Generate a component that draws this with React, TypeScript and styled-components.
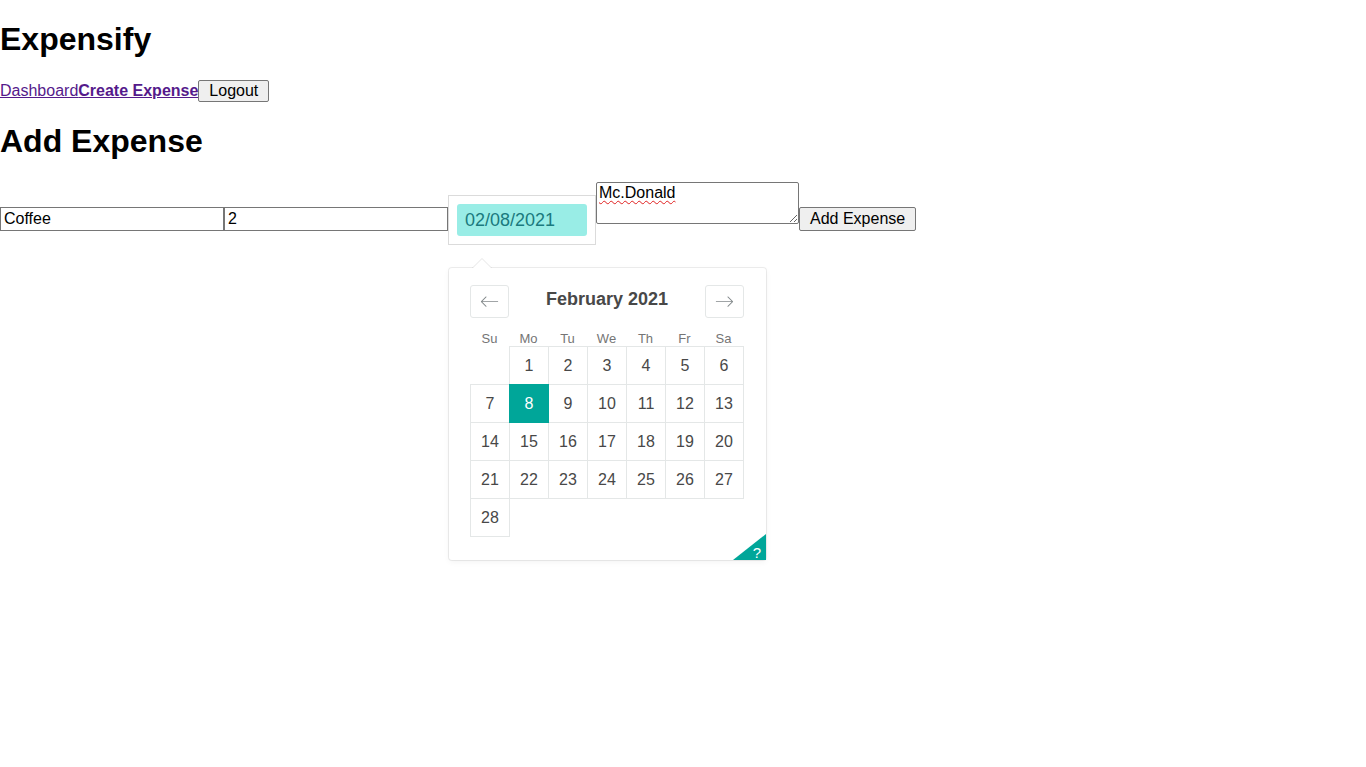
import styled, { createGlobalStyle } from "styled-components";

const GlobalStyle = createGlobalStyle`
  html, body, #root {
    height: 100%;
  }
  body {
    margin: 0;
    background: #fff;
    color: #000;
    font-family: "Liberation Sans", Arial, sans-serif;
  }
`;

const Title = styled.h1`
  font-size: 32px;
  margin: 21.44px 0;
`;

const Nav = styled.nav`
  font-size: 16px;
`;

const NavLink = styled.a<{ $active?: boolean }>`
  color: #551a8b;
  text-decoration: underline;
  font-weight: ${(p) => (p.$active ? "bold" : "normal")};
`;

const Button = styled.button`
  font-family: "Liberation Sans", Arial, sans-serif;
  font-size: 16px;
  height: ${(p) => (p.type === "submit" ? "24px" : "22px")};
  padding: 0 10px;
  background: #efefef;
  color: #000;
  border: 1px solid #767676;
  border-radius: 2px;
  box-sizing: border-box;
`;

const Form = styled.form`
  font-size: 16px;
`;

const TextInput = styled.input`
  width: 224px;
  height: 24px;
  box-sizing: border-box;
  padding: 1px 3px;
  border: 1px solid #767676;
  font-family: "Liberation Sans", Arial, sans-serif;
  font-size: 16px;
  color: #000;
`;

const NoteArea = styled.textarea`
  width: 203px;
  height: 42px;
  box-sizing: border-box;
  padding: 1px 2px;
  border: 1px solid #767676;
  border-radius: 2px;
  font-family: "Liberation Sans", Arial, sans-serif;
  font-size: 16px;
  color: #000;
  text-decoration: underline wavy #e02020;
  text-decoration-thickness: 1px;
  text-underline-offset: 2px;
`;

const DatePicker = styled.div`
  display: inline-block;
  position: relative;
  vertical-align: -2px;
  padding: 8px;
  border: 1px solid #dbdbdb;
  background: #fff;
`;

const DateInput = styled.input`
  width: 130px;
  height: 32px;
  box-sizing: border-box;
  padding: 0 8px;
  border: none;
  border-radius: 3px;
  background: #99ede6;
  color: #1b7a7e;
  font-family: "Liberation Sans", Arial, sans-serif;
  font-size: 18px;
  outline: none;
`;

const Popup = styled.div`
  position: absolute;
  top: 72px;
  left: 0;
  width: 317px;
  box-sizing: border-box;
  padding: 17px 22px 24px 21px;
  background: #fff;
  border-radius: 3px;
  box-shadow: 0 2px 6px rgba(0, 0, 0, 0.05), 0 0 0 1px rgba(0, 0, 0, 0.07);
  z-index: 2;
`;

const Fang = styled.svg`
  position: absolute;
  top: -10px;
  left: 23px;
`;

const Header = styled.div`
  display: flex;
  justify-content: space-between;
  align-items: flex-start;
`;

const NavButton = styled.button`
  width: 39px;
  height: 33px;
  padding: 0;
  display: flex;
  align-items: center;
  justify-content: center;
  background: #fff;
  border: 1px solid #e4e7e7;
  border-radius: 3px;
  svg {
    width: 19px;
    height: 19px;
    fill: #82888a;
  }
`;

const Caption = styled.div`
  font-size: 18px;
  font-weight: bold;
  line-height: 28px;
  color: #484848;
`;

const WeekHeader = styled.div`
  display: grid;
  grid-template-columns: repeat(7, 39px);
  margin-top: 14px;
  font-size: 13px;
  line-height: 14px;
  color: #757575;
  text-align: center;
`;

const DayGrid = styled.div`
  display: grid;
  grid-template-columns: repeat(7, 39px);
  grid-auto-rows: 38px;
`;

const Day = styled.div<{ $selected?: boolean; $start?: number }>`
  width: 40px;
  height: 39px;
  box-sizing: border-box;
  display: flex;
  align-items: center;
  justify-content: center;
  font-size: 16px;
  color: ${(p) => (p.$selected ? "#fff" : "#484848")};
  background: ${(p) => (p.$selected ? "#00a699" : "#fff")};
  border: 1px solid ${(p) => (p.$selected ? "#00a699" : "#e4e7e7")};
  grid-column-start: ${(p) => p.$start ?? "auto"};
  position: relative;
  z-index: ${(p) => (p.$selected ? 1 : 0)};
`;

const ShortcutCorner = styled.button`
  position: absolute;
  right: 0;
  bottom: 0;
  width: 0;
  height: 0;
  padding: 0;
  border: none;
  border-top: 26px solid transparent;
  border-right: 33px solid #00a699;
  background: none;
  span {
    position: absolute;
    right: -28px;
    bottom: -1px;
    color: #fff;
    font-size: 15px;
    font-family: "Liberation Sans", Arial, sans-serif;
  }
`;

const LeftArrow = () => (
  <svg viewBox="0 0 1000 1000">
    <path d="M336 275L126 485h806c13 0 23 10 23 23s-10 23-23 23H126l210 210c11 11 11 21 0 32-5 5-10 7-16 7s-11-2-16-7L55 524c-11-11-11-21 0-32l249-249c21-22 53 10 32 32z" />
  </svg>
);

const RightArrow = () => (
  <svg viewBox="0 0 1000 1000">
    <path d="M694 242l249 250c12 11 12 21 1 32L694 773c-5 5-10 7-16 7s-11-2-16-7c-11-11-11-21 0-32l210-210H68c-13 0-23-10-23-23s10-23 23-23h806L662 275c-21-22 11-54 32-33z" />
  </svg>
);

const weekdays = ["Su", "Mo", "Tu", "We", "Th", "Fr", "Sa"];
const days = Array.from({ length: 28 }, (_, i) => i + 1);

function MonthPicker() {
  return (
    <Popup>
      <Fang width="20" height="11" viewBox="0 0 20 11">
        <path d="M0 10.5 L10 0.5 L20 10.5" fill="#fff" stroke="rgba(0,0,0,0.1)" />
        <rect x="0" y="10" width="20" height="1" fill="#fff" />
      </Fang>
      <Header>
        <NavButton type="button" aria-label="previous month">
          <LeftArrow />
        </NavButton>
        <Caption>February 2021</Caption>
        <NavButton type="button" aria-label="next month">
          <RightArrow />
        </NavButton>
      </Header>
      <WeekHeader>
        {weekdays.map((d) => (
          <span key={d}>{d}</span>
        ))}
      </WeekHeader>
      <DayGrid>
        {days.map((d) => (
          <Day key={d} $selected={d === 8} $start={d === 1 ? 2 : undefined}>
            {d}
          </Day>
        ))}
      </DayGrid>
      <ShortcutCorner type="button" aria-label="keyboard shortcuts">
        <span>?</span>
      </ShortcutCorner>
    </Popup>
  );
}

export default function App() {
  return (
    <>
      <GlobalStyle />
      <Title>Expensify</Title>
      <Nav>
        <NavLink href="#">Dashboard</NavLink>
        <NavLink href="#" $active>
          Create Expense
        </NavLink>
        <Button type="button">Logout</Button>
      </Nav>
      <Title>Add Expense</Title>
      <Form onSubmit={(e) => e.preventDefault()}>
        <TextInput type="text" defaultValue="Coffee" />
        <TextInput type="text" defaultValue="2" />
        <DatePicker>
          <DateInput type="text" defaultValue="02/08/2021" readOnly />
          <MonthPicker />
        </DatePicker>
        <NoteArea defaultValue="Mc.Donald" />
        <Button type="submit">Add Expense</Button>
      </Form>
    </>
  );
}
